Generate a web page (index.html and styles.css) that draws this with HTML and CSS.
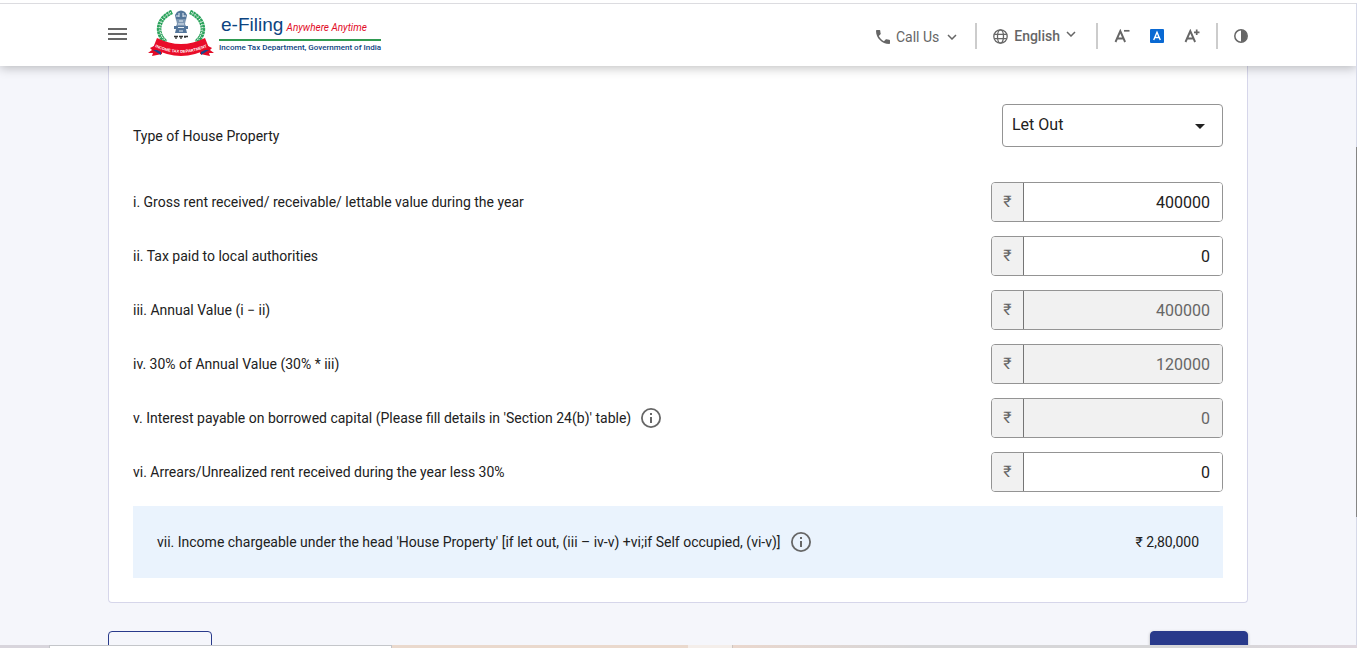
FILE: index.html
```html
<!DOCTYPE html>
<html lang="en">
<head>
<meta charset="utf-8">
<title>e-Filing - House Property</title>
<link rel="stylesheet" href="styles.css">
</head>
<body>
<div class="window">
  <div class="page">
    <header class="header">
      <div class="container header-inner">
        <button class="icon-button menu" type="button" aria-label="Menu">
          <svg width="19" height="14" viewBox="0 0 19 14"><path d="M0 2h19M0 7h19M0 12h19" stroke="#666" stroke-width="2"/></svg>
        </button>
        <a class="brand" href="#">
          <svg class="emblem" width="66" height="48" viewBox="0 0 66 48">
            <g fill="none" stroke="#2ba35c">
              <path d="M24 2C8 9 8 25 18 32" stroke-width="4.600" stroke-dasharray="2.600 .5"/>
              <path d="M42 2C58 9 58 25 48 32" stroke-width="4.600" stroke-dasharray="2.600 .5"/>
              <path d="M23 2.500C9 9 9 24 18 31M43 2.500C57 9 57 24 48 31" stroke="#fff" stroke-width="1" stroke-dasharray="1.200 1.500"/>
            </g>
            <g fill="#53759a">
              <path d="M29 2q4-3 8 0l2 3-1 5q-5 3-10 0l-1-5z"/>
              <path d="M28 9h10l-1 5 1 2H28l1-2z" fill="#7d97b3"/>
              <path d="M26 16h14v3H26zM28 19h10l1 4H27z"/>
            </g>
            <path d="M31 3v4M35 3v4M28 6h3M35 6h3M31 11h4M30 14h6M30 17.500h6M31 21h4" stroke="#e5edf4" stroke-width="1" fill="none"/>
            <path d="M26 26.500h4M31 26.500h4M36 26.500h4M28 27v2M33 27v2M37 27v1" stroke="#333" stroke-width="1.300" fill="none"/>
            <path d="M6 36L2 38l2 2-4 3 5 0-1 3 10-2v-5zM60 36l4 2-2 2 4 3-5 0 1 3-10-2v-5z" fill="#e20a26"/>
            <path d="M5 40l8 5v-5zM61 40l-8 5v-5z" fill="#1b4589"/>
            <path d="M9 28Q33 40 57 28L61 38Q33 54 5 38z" fill="#e90d29"/>
            <path id="ribbon" d="M6 36.500Q33 49 60 36.500" fill="none"/>
            <text class="ribbon-text"><textPath href="#ribbon" startOffset="50%" text-anchor="middle">INCOME TAX DEPARTMENT</textPath></text>
          </svg>
          <span class="brand-text">
            <span class="brand-title">e-Filing <em class="brand-tag">Anywhere Anytime</em></span>
            <span class="brand-sub">Income Tax Department, Government of India</span>
          </span>
        </a>
        <nav class="tools">
          <button class="tool call" type="button">
            <svg width="14" height="14" viewBox="3 3 18 18"><path fill="#666" d="M6.620 10.790c1.440 2.830 3.760 5.140 6.590 6.590l2.200-2.200c.27-.27.67-.36 1.020-.24 1.120.37 2.330.57 3.570.57.55 0 1 .45 1 1V20c0 .55-.45 1-1 1C10.610 21 3 13.390 3 4c0-.55.45-1 1-1h3.500c.55 0 1 .45 1 1 0 1.250.2 2.450.57 3.570.11.35.03.74-.25 1.020z"/></svg>
            <span class="call-text">Call Us</span>
            <svg width="10" height="6" viewBox="0 0 10 6"><path d="M1 1l4 4 4-4" fill="none" stroke="#666" stroke-width="1.500"/></svg>
          </button>
          <span class="separator"></span>
          <button class="tool language" type="button">
            <svg width="15" height="15" viewBox="0 0 15 15"><g fill="none" stroke="#666" stroke-width="1.300"><circle cx="7.500" cy="7.500" r="6.700"/><ellipse cx="7.500" cy="7.500" rx="3" ry="6.700"/><path d="M1.300 5.300h12.400M1.300 9.700h12.400"/></g></svg>
            <span>English</span>
            <svg class="raised" width="10" height="6" viewBox="0 0 10 6"><path d="M1 1l4 4 4-4" fill="none" stroke="#666" stroke-width="1.500"/></svg>
          </button>
          <span class="separator"></span>
          <span class="font-sizes">
            <button class="icon-button" type="button" aria-label="Decrease text size">
              <svg width="16" height="14" viewBox="0 0 16 14"><path d="M1.500 13L6.300 2l4.800 11M3.200 9.500h6.200" fill="none" stroke="#666" stroke-width="1.900"/><path d="M10 1.800h5.500" stroke="#666" stroke-width="1.700"/></svg>
            </button>
            <button class="icon-button" type="button" aria-label="Default text size">
              <svg width="14" height="14" viewBox="0 0 14 14"><rect width="14" height="14" rx="1" fill="#0969d3"/><path d="M3.700 11L7 3.200l3.300 7.800M5 8.500h4" fill="none" stroke="#fff" stroke-width="1.400"/></svg>
            </button>
            <button class="icon-button" type="button" aria-label="Increase text size">
              <svg width="16" height="14" viewBox="0 0 16 14"><path d="M1.500 13L6.300 2l4.800 11M3.200 9.500h6.200" fill="none" stroke="#666" stroke-width="1.900"/><path d="M10 3.300h5.500M12.700 .6v5.400" stroke="#666" stroke-width="1.700"/></svg>
            </button>
          </span>
          <span class="separator"></span>
          <button class="icon-button" type="button" aria-label="Contrast">
            <svg width="14" height="14" viewBox="0 0 14 14"><circle cx="7" cy="7" r="6.200" fill="none" stroke="#666" stroke-width="1.500"/><path d="M7 1a6 6 0 0 1 0 12z" fill="#666"/></svg>
          </button>
        </nav>
      </div>
    </header>
    <main class="content">
      <div class="container">
        <form class="card">
          <div class="row type-row">
            <label class="label" for="type">Type of House Property</label>
            <span class="select-wrap">
              <select class="select" id="type"><option>Let Out</option></select>
              <svg class="select-arrow" width="10" height="5" viewBox="0 0 10 5"><path d="M0 0h10L5 5z" fill="#212121"/></svg>
            </span>
          </div>
          <div class="row">
            <label class="label" for="f1">i. Gross rent received/ receivable/ lettable value during the year</label>
            <span class="money"><span class="prefix">₹</span><input class="amount" id="f1" value="400000"></span>
          </div>
          <div class="row">
            <label class="label" for="f2">ii. Tax paid to local authorities</label>
            <span class="money"><span class="prefix">₹</span><input class="amount" id="f2" value="0"></span>
          </div>
          <div class="row">
            <label class="label" for="f3">iii. Annual Value (i − ii)</label>
            <span class="money"><span class="prefix">₹</span><input class="amount" id="f3" value="400000" disabled></span>
          </div>
          <div class="row">
            <label class="label" for="f4">iv. 30% of Annual Value (30% * iii)</label>
            <span class="money"><span class="prefix">₹</span><input class="amount" id="f4" value="120000" disabled></span>
          </div>
          <div class="row">
            <span class="label-group">
              <label class="label" for="f5">v. Interest payable on borrowed capital (Please fill details in 'Section 24(b)' table)</label>
              <svg width="20" height="20" viewBox="0 0 20 20"><circle cx="10" cy="10" r="9.100" fill="none" stroke="#666" stroke-width="1.800"/><path d="M10 5v2M10 9v6" stroke="#666" stroke-width="2"/></svg>
            </span>
            <span class="money"><span class="prefix">₹</span><input class="amount" id="f5" value="0" disabled></span>
          </div>
          <div class="row">
            <label class="label" for="f6">vi. Arrears/Unrealized rent received during the year less 30%</label>
            <span class="money"><span class="prefix">₹</span><input class="amount" id="f6" value="0"></span>
          </div>
          <div class="row total">
            <span class="label-group">
              <span class="label">vii. Income chargeable under the head 'House Property' [if let out, (iii – iv-v) +vi;if Self occupied, (vi-v)]</span>
              <svg width="20" height="20" viewBox="0 0 20 20"><circle cx="10" cy="10" r="9.100" fill="none" stroke="#666" stroke-width="1.800"/><path d="M10 5v2M10 9v6" stroke="#666" stroke-width="2"/></svg>
            </span>
            <output>₹ 2,80,000</output>
          </div>
        </form>
        <div class="actions">
          <button class="action action-outline" type="button" aria-label="Back"></button>
          <button class="action action-filled" type="button" aria-label="Next"></button>
        </div>
      </div>
    </main>
  </div>
  <div class="scroll-rail"><div class="scroll-thumb"></div></div>
  <div class="taskbar"><span class="task task-plain"></span><span class="task task-active"></span><span class="task task-warm"></span><span class="task task-light"></span><span class="task task-rest"></span></div>
</div>
</body>
</html>
```
FILE: styles.css
```css
* { box-sizing: border-box; }
body {
  margin: 0;
  font: 14px/22px Roboto, "Noto Sans", sans-serif;
  color: #212121;
  background: #fff;
}
button, input, select { font: inherit; color: inherit; }
button { cursor: pointer; }
svg { display: block; flex: none; }

.window {
  height: 100vh;
  padding-top: 3px;
  display: grid;
  grid-template-columns: minmax(0, 1fr) 1px;
  grid-template-rows: minmax(0, 1fr) 3px;
}
.page {
  display: flex;
  flex-direction: column;
  min-height: 0;
  overflow: hidden;
  border-top: 1px solid #dcdce0;
  background: #f5f6fb;
}
.container { width: 100%; max-width: 1140px; margin: 0 auto; }

.header {
  flex: none;
  z-index: 1;
  background: #fff;
  box-shadow: 0 2px 10px rgba(0, 0, 0, .25);
}
.header-inner { display: flex; align-items: center; height: 62px; }
.icon-button { padding: 0; border: 0; background: none; }
.menu { padding-bottom: 2px; }
.brand {
  display: flex;
  align-items: center;
  gap: 5px;
  margin-left: 21px;
  padding-bottom: 2px;
  text-decoration: none;
  color: #0c4481;
}
.ribbon-text { font: bold 4px "Liberation Sans", sans-serif; fill: #fff; }
.brand-text {
  display: flex;
  flex-direction: column;
  white-space: nowrap;
}
.brand-title {
  font-family: "Liberation Sans", sans-serif;
  font-size: 19px;
  line-height: 22px;
  padding: 0 2px;
  border-bottom: 2px solid #2f9a51;
}
.brand-tag { margin-left: -2px; font-family: Roboto, sans-serif; font-size: 10px; color: #e20a26; }
.brand-sub { font-size: 8px; line-height: 14px; font-weight: 500; }

.tools { display: flex; align-items: center; gap: 16px; margin-left: auto; padding-top: 2px; color: #666; }
.tool { display: flex; align-items: center; gap: 6px; padding: 0; border: 0; background: none; }
.call { margin-right: 2px; padding-top: 2px; }
.call-text { padding-right: 2px; }
.language { margin-right: 4px; font-weight: 500; }
.raised { margin-bottom: 4px; }
.font-sizes { display: flex; gap: 20px; }
.separator { width: 2px; height: 26px; background: #ccc; }

.content { flex: 1; min-height: 0; overflow: hidden; }
.card {
  display: flex;
  flex-direction: column;
  gap: 14px;
  padding: 38px 24px 24px;
  border: 1px solid #d6d6ea;
  border-top: 0;
  border-radius: 0 0 4px 4px;
  background: #fff;
}
.row { display: flex; align-items: center; justify-content: space-between; }
.type-row { align-items: flex-end; margin-bottom: 21px; }
.label-group { display: flex; align-items: center; gap: 10px; }
.select-wrap { position: relative; width: 221px; }
.select {
  display: block;
  width: 100%;
  height: 43px;
  padding: 0 30px 2px 9px;
  border: 1px solid #949494;
  border-radius: 4px;
  appearance: none;
  background: #fff;
  font-size: 16px;
}
.select-arrow { position: absolute; right: 18px; top: 20px; pointer-events: none; }
.money {
  display: flex;
  width: 232px;
  height: 40px;
  border: 1px solid #949494;
  border-radius: 4px;
  overflow: hidden;
}
.prefix {
  flex: none;
  width: 32px;
  border-right: 1px solid #757575;
  background: #f1f1f1;
  color: #666;
  font-size: 16px;
  line-height: 37px;
  text-align: center;
}
.amount {
  flex: 1;
  min-width: 0;
  padding: 2px 12px 0;
  border: 0;
  background: #fff;
  font-size: 16px;
  text-align: right;
}
.amount:disabled { background: #f1f1f1; color: #666; }
.total { min-height: 72px; padding: 0 24px; background: #eaf3fd; }

.actions { display: flex; justify-content: space-between; margin-top: 28px; }
.action { height: 40px; border: 1px solid #293a8b; border-radius: 4px; }
.action-outline { width: 104px; background: transparent; }
.action-filled { width: 98px; background: #293a8b; box-shadow: 0 1px 3px rgba(0, 0, 0, .3); }

.scroll-rail {
  display: grid;
  grid-template-rows: 144fr 370fr 128fr;
  background: #d6d9e8;
}
.scroll-thumb { grid-row: 2; background: #858585; }
.taskbar { grid-column: 1 / -1; display: flex; }
.task-plain { width: 49px; background: #d8d5dc; }
.task-active { width: 343px; background: #fff; border: 1px solid #c4c6ca; border-bottom: 0; }
.task-warm { width: 296px; background: #ead9cd; }
.task-light { width: 45px; background: #f4eeea; border-right: 1px solid #ccc5c0; }
.task-rest { flex: 1; background: linear-gradient(90deg, #ead7cd, #d6d6d8 30%, #d6d6d8 75%, #dfd7de); }
```
